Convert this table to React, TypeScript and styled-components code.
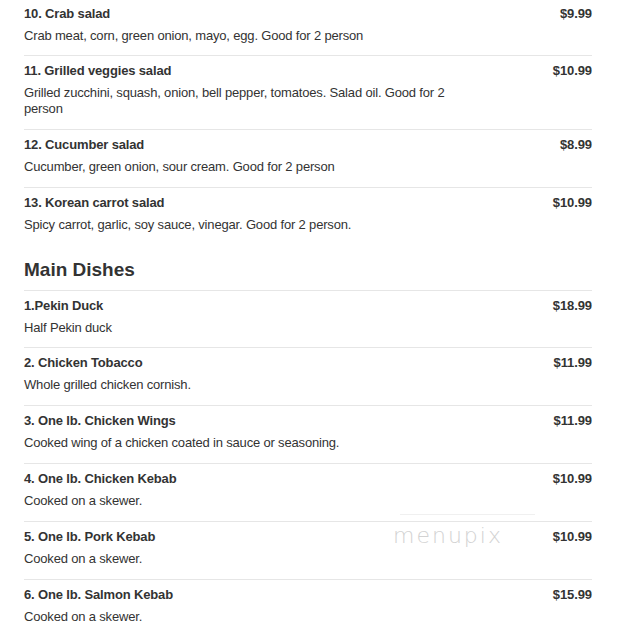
import React from "react";
import styled, { createGlobalStyle } from "styled-components";

const Global = createGlobalStyle`
  html, body { margin: 0; padding: 0; background: #fff; }
  body { font-family: "Liberation Sans", Arial, sans-serif; color: #333; }
`;

const Page = styled.div`
  position: relative;
  padding: 0 35px 0 24px;
`;

const Section = styled.section`
  display: flex;
  flex-direction: column;
`;

const Heading = styled.h2`
  margin: 13px 0 0;
  padding: 0 0 8px;
  font-size: 19px;
  line-height: 24px;
  font-weight: bold;
  color: #333;
  border-bottom: 1px solid #e6e6e6;
`;

const Item = styled.div<{ $last?: boolean; $first?: boolean }>`
  display: grid;
  grid-template-columns: 1fr auto;
  column-gap: 20px;
  padding: ${(p) => (p.$first ? "5.5px" : "7px")} 0 11.8px;
  border-bottom: ${(p) => (p.$last ? "none" : "1px solid #e6e6e6")};
`;

const Info = styled.div`
  display: flex;
  flex-direction: column;
  gap: 6px;
  max-width: 430px;
`;

const Title = styled.div`
  font-size: 13px;
  line-height: 16px;
  font-weight: bold;
  letter-spacing: -0.15px;
`;

const Desc = styled.div`
  font-size: 13px;
  line-height: 16px;
  letter-spacing: -0.17px;
`;

const Price = styled.div`
  font-size: 13px;
  line-height: 16px;
  font-weight: bold;
  text-align: right;
  letter-spacing: -0.1px;
`;

const Watermark = styled.div`
  position: absolute;
  left: 393px;
  top: 514px;
  display: flex;
  flex-direction: column;
  align-items: flex-start;
  pointer-events: none;
`;

const WatermarkLine = styled.div`
  width: 135px;
  height: 1px;
  margin-left: 7px;
  background: #f0f0f0;
`;

const WatermarkText = styled.div`
  font-family: "DejaVu Sans", sans-serif;
  font-weight: 200;
  font-size: 22px;
  line-height: 26px;
  letter-spacing: 2px;
  color: #d2d2d2;
  margin-top: 8px;
`;

type Dish = { name: string; desc: string; price: string };

const salads: Dish[] = [
  { name: "10. Crab salad", desc: "Crab meat, corn, green onion, mayo, egg. Good for 2 person", price: "$9.99" },
  { name: "11. Grilled veggies salad", desc: "Grilled zucchini, squash, onion, bell pepper, tomatoes. Salad oil. Good for 2 person", price: "$10.99" },
  { name: "12. Cucumber salad", desc: "Cucumber, green onion, sour cream. Good for 2 person", price: "$8.99" },
  { name: "13. Korean carrot salad", desc: "Spicy carrot, garlic, soy sauce, vinegar. Good for 2 person.", price: "$10.99" },
];

const mains: Dish[] = [
  { name: "1.Pekin Duck", desc: "Half Pekin duck", price: "$18.99" },
  { name: "2. Chicken Tobacco", desc: "Whole grilled chicken cornish.", price: "$11.99" },
  { name: "3. One lb. Chicken Wings", desc: "Cooked wing of a chicken coated in sauce or seasoning.", price: "$11.99" },
  { name: "4. One lb. Chicken Kebab", desc: "Cooked on a skewer.", price: "$10.99" },
  { name: "5. One lb. Pork Kebab", desc: "Cooked on a skewer.", price: "$10.99" },
  { name: "6. One lb. Salmon Kebab", desc: "Cooked on a skewer.", price: "$15.99" },
];

const Row = ({ d, first, last }: { d: Dish; first?: boolean; last?: boolean }) => (
  <Item $first={first} $last={last}>
    <Info>
      <Title>{d.name}</Title>
      <Desc>{d.desc}</Desc>
    </Info>
    <Price>{d.price}</Price>
  </Item>
);

export default function App() {
  return (
    <>
      <Global />
      <Page>
        <Section>
          {salads.map((d, i) => (
            <Row key={d.name} d={d} first={i === 0} last={i === salads.length - 1} />
          ))}
        </Section>
        <Section>
          <Heading>Main Dishes</Heading>
          {mains.map((d) => (
            <Row key={d.name} d={d} />
          ))}
        </Section>
        <Watermark>
          <WatermarkLine />
          <WatermarkText>menupix</WatermarkText>
        </Watermark>
      </Page>
    </>
  );
}
